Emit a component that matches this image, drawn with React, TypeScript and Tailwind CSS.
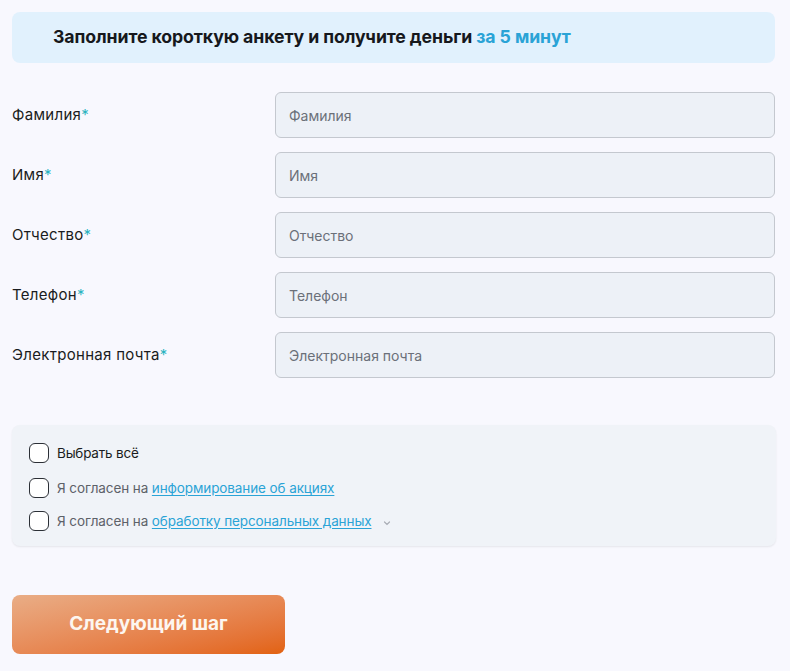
import { useState } from "react";

const fields = ["Фамилия", "Имя", "Отчество", "Телефон", "Электронная почта"];

function Check({ checked, onChange }: { checked: boolean; onChange: () => void }) {
  return (
    <button
      className="h-[20px] w-[20px] shrink-0 rounded-[6px] border-[1.5px] border-[#2b2f36] bg-white"
      onClick={onChange}
      type="button"
    >
      {checked && (
        <svg className="h-full w-full" fill="none" stroke="#2b2f36" viewBox="0 0 20 20">
          <path d="M5 10l3.5 3.5L15 7" strokeLinecap="round" strokeLinejoin="round" strokeWidth={2} />
        </svg>
      )}
    </button>
  );
}

export default function App() {
  const [checks, setChecks] = useState([false, false]);
  const all = checks.every(Boolean);

  return (
    <div className="min-h-[671px] bg-[#f8f8fe] px-[12px] pt-[12px] font-['Inter',sans-serif] text-[#1a1c20]">
      <div className="flex h-[51px] w-[763px] items-center rounded-[8px] bg-[#e1f1fd] pl-[41px]">
        <h1 className="text-[17.7px] font-bold tracking-[-0.1px] text-[#16181c]">
          Заполните короткую анкету и получите деньги <span className="text-[#2aa3d6]">за 5 минут</span>
        </h1>
      </div>

      <div className="mt-[29px] flex w-[763px] flex-col gap-[14px]">
        {fields.map((f) => (
          <div className="flex items-center" key={f}>
            <label className="w-[263px] text-[15px] tracking-[0.3px] text-[#1a1c20]">
              {f}
              <span className="text-[#2ab3bf]">*</span>
            </label>
            <input
              className="h-[46px] flex-1 rounded-[6px] border border-[#c4c8cf] bg-[#edf1f7] px-[13px] text-[14px] outline-none placeholder:text-[#6b7079]"
              placeholder={f}
            />
          </div>
        ))}
      </div>

      <div className="mt-[47px] flex w-[764px] flex-col gap-[15px] rounded-[8px] bg-[#f0f3f8] px-[17px] pb-[15px] pt-[18px] shadow-[0_1px_2px_rgba(0,0,0,0.08)]">
        <div className="flex items-center gap-[8px] text-[13.5px] tracking-[-0.2px] text-[#1a1c20]">
          <Check checked={all} onChange={() => setChecks([!all, !all])} />
          Выбрать всё
        </div>
        <div className="flex flex-col gap-[12px] text-[13.5px] tracking-[-0.1px] text-[#5d6169]">
          <div className="flex items-center gap-[8px]">
            <Check checked={checks[0]} onChange={() => setChecks([!checks[0], checks[1]])} />
            <span>
              Я согласен на{" "}
              <a className="text-[#2aa3d6] underline underline-offset-2" href="#">
                информирование об акциях
              </a>
            </span>
          </div>
          <div className="flex items-center gap-[8px]">
            <Check checked={checks[1]} onChange={() => setChecks([checks[0], !checks[1]])} />
            <span>
              Я согласен на{" "}
              <a className="text-[#2aa3d6] underline underline-offset-2" href="#">
                обработку персональных данных
              </a>
            </span>
            <svg className="ml-[2px] mt-[4px] h-[10px] w-[10px]" fill="none" stroke="#a9adb5" viewBox="0 0 10 10">
              <path d="M2.5 4l2.5 2.5L7.5 4" strokeLinecap="round" strokeWidth={1.2} />
            </svg>
          </div>
        </div>
      </div>

      <button
        className="mt-[49px] h-[59px] w-[273px] rounded-[8px] bg-gradient-to-br from-[#e9ad86] to-[#e2620e] text-[19px] font-bold text-[#fdf6f0]"
        type="button"
      >
        Следующий шаг
      </button>
    </div>
  );
}
